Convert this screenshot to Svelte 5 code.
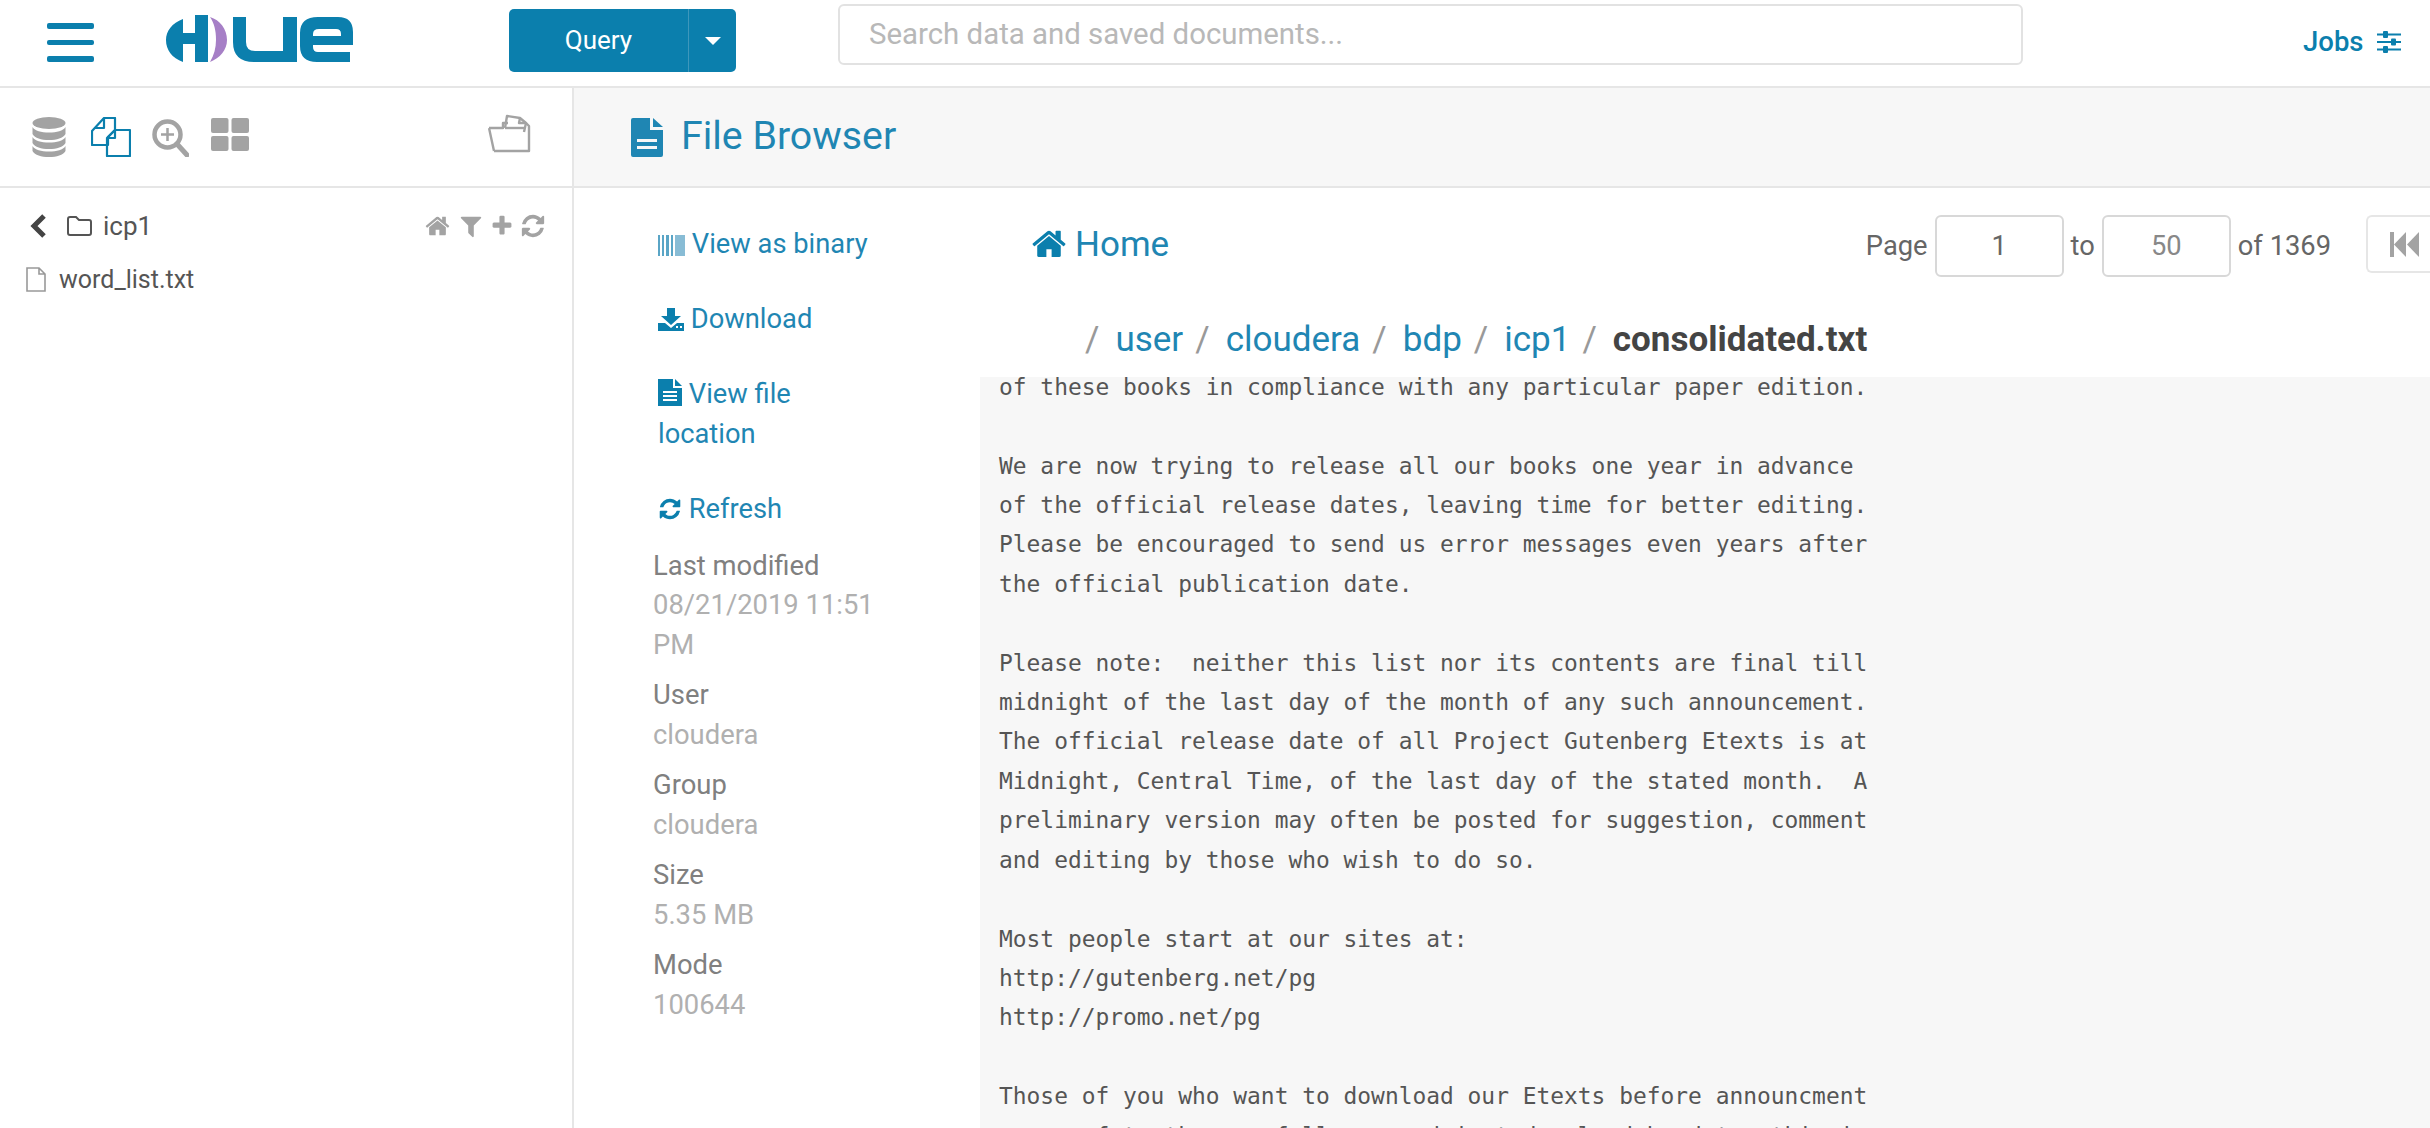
<script>
  const home = "M1472 992v480q0 26-19 45t-45 19h-384v-384h-256v384h-384q-26 0-45-19t-19-45v-480q0-1 .5-3t.5-3l575-474 575 474q1 2 1 6zm223-69l-62 74q-8 9-21 11h-3q-13 0-21-7l-692-577-692 577q-12 8-24 7-13-2-21-11l-62-74q-8-10-7-23.5t11-21.5l719-599q32-26 76-26t76 26l244 204v-195q0-14 9-23t23-9h192q14 0 23 9t9 23v408l219 182q10 8 11 21.5t-7 23.5z";
  const refresh = "M1639 1056q0 5-1 7-64 268-268 434.5t-478 166.5q-146 0-282.5-55t-243.5-157l-129 129q-19 19-45 19t-45-19-19-45v-448q0-26 19-45t45-19h448q26 0 45 19t19 45-19 45l-137 137q71 66 161 102t187 36q134 0 250-65t186-179q11-17 53-117 8-23 30-23h192q13 0 22.5 9.5t9.5 22.5zm25-800v448q0 26-19 45t-45 19h-448q-26 0-45-19t-19-45 19-45l138-138q-148-137-349-137-134 0-250 65t-186 179q-11 17-53 117-8 23-30 23h-199q-13 0-22.5-9.5t-9.5-22.5v-7q65-268 270-434.5t480-166.5q146 0 284 55.5t245 156.5l130-129q19-19 45-19t45 19 19 45z";
  const filter = "M1595 295q17 41-14 70l-493 493v742q0 42-39 59-13 5-25 5-27 0-45-19l-256-256q-19-19-19-45v-486l-493-493q-31-29-14-70 17-39 59-39h1280q42 0 59 39z";
  const plus = "M1600 736v192q0 40-28 68t-68 28h-416v416q0 40-28 68t-68 28h-192q-40 0-68-28t-28-68v-416h-416q-40 0-68-28t-28-68v-192q0-40 28-68t68-28h416v-416q0-40 28-68t68-28h192q40 0 68 28t28 68v416h416q40 0 68 28t28 68z";

  const meta = [
    { label: 'Last modified', value: '08/21/2019 11:51 PM' },
    { label: 'User', value: 'cloudera' },
    { label: 'Group', value: 'cloudera' },
    { label: 'Size', value: '5.35 MB' },
    { label: 'Mode', value: '100644' }
  ];

  const crumbs = ['user', 'cloudera', 'bdp', 'icp1'];

  const fileText = `of these books in compliance with any particular paper edition.

We are now trying to release all our books one year in advance
of the official release dates, leaving time for better editing.
Please be encouraged to send us error messages even years after
the official publication date.

Please note:  neither this list nor its contents are final till
midnight of the last day of the month of any such announcement.
The official release date of all Project Gutenberg Etexts is at
Midnight, Central Time, of the last day of the stated month.  A
preliminary version may often be posted for suggestion, comment
and editing by those who wish to do so.

Most people start at our sites at:
http://gutenberg.net/pg
http://promo.net/pg

Those of you who want to download our Etexts before announcment
can surf to them as follows, and just download by date; this is`;
</script>

<div class="page">
  <header class="topbar">
    <div class="burger"><span></span><span></span><span></span></div>
    <svg class="logo" width="220" height="80" viewBox="0 0 220 80">
      <path fill="#0b7fad" d="M33 19C22 23 16 31 16 40C16 50 22 58 33 62V44H45V62H58V15H45V33H33Z" />
      <path fill="#a67fc6" d="M60 17C70 20 77 29 77 40C77 50 70 58 60 62C64 55 66 48 66 40C66 30 64 23 60 17Z" />
      <path fill="#0b7fad" d="M83 17H96V42Q96 51 105 51H133V17H147V62H104Q83 62 83 42Z" />
      <path fill="#0b7fad" fill-rule="evenodd" d="M168 17H188Q203 17 203 32V45H163V47Q163 52 168 52H200V62H167Q150 62 150 46V33Q150 17 168 17ZM163 36H191V34Q191 29 186 29H169Q163 29 163 34Z" />
    </svg>
    <div class="query">
      <span class="query-label">Query</span>
      <span class="query-caret"><i></i></span>
    </div>
    <div class="search">Search data and saved documents...</div>
    <div class="jobs">
      Jobs
      <svg width="24" height="22" viewBox="0 0 24 22" fill="#0b7fad">
        <rect x="0" y="2.5" width="24" height="2" /><rect x="0" y="10" width="24" height="2" /><rect x="0" y="17.5" width="24" height="2" />
        <rect x="6" y="0" width="5" height="7" rx="1" /><rect x="14" y="7.5" width="5" height="7" rx="1" /><rect x="6" y="15" width="5" height="7" rx="1" />
      </svg>
    </div>
  </header>

  <div class="body">
    <aside class="sidebar">
      <div class="side-tabs">
        <svg width="34" height="40" viewBox="0 0 34 40" fill="#a3a3a3">
          <ellipse cx="17" cy="6" rx="16.5" ry="6" />
          <path d="M.5 10C3 14 9 15.5 17 15.500S31 14 33.500 10V17C31 21 25 23 17 23S3 21 .5 17Z" />
          <path d="M.5 20C3 24 9 25.500 17 25.500S31 24 33.500 20V26C31 30 25 32 17 32S3 30 .5 26Z" />
          <path d="M.5 29C3 33 9 34.500 17 34.500S31 33 33.500 29V34C31 38 25 40 17 40S3 38 .5 34Z" />
        </svg>
        <svg class="tab-docs" width="40" height="40" viewBox="0 0 40 40" fill="none" stroke="#0b7fad" stroke-width="2.200" stroke-linejoin="round">
          <path d="M13 1H24V13L17 20V28H1V14Z" />
          <path d="M13 1V11H3" />
          <path d="M24 13H39V39H16V21Z" />
          <path d="M24 13V21H17" />
        </svg>
        <svg width="37" height="38" viewBox="0 0 37 38" fill="none" stroke="#a3a3a3">
          <circle cx="15.500" cy="15.500" r="13" stroke-width="4.500" />
          <path d="M25 25L35 36" stroke-width="5" stroke-linecap="round" />
          <path d="M15.500 9V22M9 15.500H22" stroke-width="2.500" />
        </svg>
        <svg class="tab-grid" width="38" height="33" viewBox="0 0 38 33" fill="#a3a3a3">
          <rect x="0" y="0" width="17.500" height="15" rx="2" /><rect x="20.500" y="0" width="17.500" height="15" rx="2" />
          <rect x="0" y="18" width="17.500" height="15" rx="2" /><rect x="20.500" y="18" width="17.500" height="15" rx="2" />
        </svg>
        <svg class="tab-open" width="44" height="39" viewBox="0 0 44 39" fill="none" stroke="#a3a3a3" stroke-width="2.400" stroke-linejoin="round">
          <path d="M6 37H41V12L38 9M1 14H15V9H20M1 14L6 37" />
          <path d="M17 14L19 2L32 4L38 9L36 18" />
          <path d="M32 4L31 9L38 9" />
          <path d="M17 14H36" />
        </svg>
      </div>
      <div class="tree">
        <div class="tree-head">
          <svg class="back" width="16" height="24" viewBox="0 0 16 24" fill="none" stroke="#444" stroke-width="5"><path d="M14 2L4 12L14 22" /></svg>
          <svg class="folder" width="25" height="20" viewBox="0 0 25 20" fill="none" stroke="#555" stroke-width="2"><path d="M1 3Q1 1 3 1H9L12 4H22Q24 4 24 6V17Q24 19 22 19H3Q1 19 1 17Z" /></svg>
          <span class="tree-name">icp1</span>
          <div class="tree-tools">
            <svg class="tool-home" width="27" height="26" viewBox="0 0 1792 1792" fill="#a3a3a3"><path d={home} /></svg>
            <svg width="26" height="26" viewBox="0 0 1792 1792" fill="#a3a3a3"><path d={filter} /></svg>
            <svg width="24" height="24" viewBox="0 0 1792 1792" fill="#a3a3a3"><path d={plus} /></svg>
            <svg width="26" height="26" viewBox="0 0 1792 1792" fill="#a3a3a3"><path d={refresh} /></svg>
          </div>
        </div>
        <div class="tree-file">
          <svg width="20" height="25" viewBox="0 0 20 25" fill="none" stroke="#999" stroke-width="1.600"><path d="M1 1H13L19 7V24H1ZM13 1V7H19" /></svg>
          <span>word_list.txt</span>
        </div>
      </div>
    </aside>

    <main class="main">
      <div class="title-bar">
        <svg width="32" height="39" viewBox="0 0 32 39" fill="#1f86b3">
          <path fill-rule="evenodd" d="M2 0H19V12H32V37Q32 39 30 39H2Q0 39 0 37V2Q0 0 2 0ZM6 21V24H26V21ZM6 28V31H26V28Z" />
          <path d="M22 0L32 9H22Z" />
        </svg>
        <h1>File Browser</h1>
      </div>

      <div class="browser">
        <div class="actions">
          <a class="action">
            <svg width="27" height="21" viewBox="0 0 27 21" fill="#5aa5c6"><rect x="0" width="2" height="21" /><rect x="4" width="2" height="21" /><rect x="8" width="3" height="21" /><rect x="13" width="2" height="21" /><rect x="17" width="10" height="21" fill="#88bcd5" /></svg>
            View as binary
          </a>
          <a class="action">
            <svg width="26" height="23" viewBox="0 0 26 23" fill="#0b7fad"><path d="M9 0H17V8H23L13 17L3 8H9Z" /><path fill-rule="evenodd" d="M0 15H7L13 20L19 15H26V23H0ZM18 18V20H20V18ZM22 18V20H24V18Z" /></svg>
            Download
          </a>
          <a class="action">
            <svg width="24" height="27" viewBox="0 0 24 27" fill="#0b7fad">
              <path fill-rule="evenodd" d="M0 0H15V9H24V27H0ZM5 12V14H19V12ZM5 16V18H19V16ZM5 20V22H19V20Z" />
              <path d="M17 0L24 7H17Z" />
            </svg>
            View file location
          </a>
          <a class="action">
            <svg width="24" height="24" viewBox="0 0 1792 1792" fill="#0b7fad"><path d={refresh} /></svg>
            Refresh
          </a>

          <dl class="meta">
            {#each meta as item}
              <dt>{item.label}</dt>
              <dd>{item.value}</dd>
            {/each}
          </dl>
        </div>

        <div class="viewer">
          <div class="viewer-head">
            <a class="home">
              <svg width="34" height="32" viewBox="64 200 1664 1400" fill="#0b7fad"><path d={home} /></svg>
              Home
            </a>
            <div class="pager">
              <span>Page</span>
              <span class="page-box dark">1</span>
              <span>to</span>
              <span class="page-box">50</span>
              <span>of 1369</span>
              <span class="page-btn">
                <svg width="29" height="25" viewBox="0 0 29 25" fill="#a3a3a3"><rect width="4" height="25" /><path d="M4 12.500L16 0V25Z" /><path d="M17 12.500L29 0V25Z" /></svg>
              </span>
            </div>
          </div>

          <div class="crumbs">
            <span class="sep">/</span>
            {#each crumbs as crumb}
              <a>{crumb}</a>
              <span class="sep">/</span>
            {/each}
            <strong>consolidated.txt</strong>
          </div>

          <div class="file-view">
            <pre>{fileText}</pre>
          </div>
        </div>
      </div>
    </main>
  </div>
</div>

<style>
  :global(body) {
    margin: 0;
    background: #fff;
    font-family: Roboto, sans-serif;
    color: #444;
  }
  .page {
    width: 2430px;
    height: 1128px;
    overflow: hidden;
    display: flex;
    flex-direction: column;
  }
  .topbar {
    height: 86px;
    flex: none;
    display: flex;
    align-items: flex-start;
    padding-left: 47px;
    border-bottom: 2px solid #e6e6e6;
  }
  .burger {
    width: 47px;
    margin-top: 23px;
    display: flex;
    flex-direction: column;
    gap: 11px;
  }
  .burger span {
    height: 5.500px;
    background: #0b7fad;
    border-radius: 2px;
  }
  .logo {
    margin-left: 56px;
    flex: none;
  }
  .query {
    margin: 9px 0 0 139px;
    width: 227px;
    height: 63px;
    display: flex;
    background: #0b7fad;
    border-radius: 5px;
    color: #fff;
    font-size: 26px;
  }
  .query-label {
    width: 179px;
    text-align: center;
    line-height: 63px;
    border-right: 1px solid #3d97bc;
  }
  .query-caret {
    flex: 1;
    display: flex;
    align-items: center;
    justify-content: center;
  }
  .query-caret i {
    border-left: 8px solid transparent;
    border-right: 8px solid transparent;
    border-top: 8px solid #fff;
  }
  .search {
    margin: 4px 0 0 102px;
    width: 1185px;
    height: 61px;
    box-sizing: border-box;
    border: 2px solid #e2e2e2;
    border-radius: 6px;
    padding-left: 29px;
    line-height: 56px;
    font-size: 29.400px;
    color: #b8b8b8;
  }
  .jobs {
    margin: 22px 0 0 280px;
    display: flex;
    align-items: center;
    gap: 13px;
    font-size: 27.500px;
    font-weight: 500;
    line-height: 40px;
    color: #0b7fad;
  }
  .body {
    flex: 1;
    display: flex;
    min-height: 0;
  }
  .sidebar {
    width: 572px;
    flex: none;
    border-right: 2px solid #e6e6e6;
  }
  .side-tabs {
    height: 100px;
    box-sizing: border-box;
    border-bottom: 2px solid #e6e6e6;
    padding: 29px 40px 0 32px;
    display: flex;
    align-items: flex-start;
  }
  .tab-docs { margin-left: 25px; }
  .side-tabs svg:nth-child(3) { margin: 2px 0 0 21px; }
  .tab-grid { margin: 1px 0 0 22px; }
  .tab-open { margin: -3px 0 0 auto; }
  .tree {
    padding: 21px 26px 0 30px;
  }
  .tree-head {
    display: flex;
    align-items: center;
    height: 34px;
  }
  .folder { margin-left: 21px; }
  .tree-name {
    margin-left: 11px;
    font-size: 26px;
    color: #555;
  }
  .tree-tools {
    margin-left: auto;
    display: flex;
    align-items: center;
    gap: 6px;
  }
  .tool-home { margin-right: 1px; }
  .tree-file {
    margin: 22px 0 0 -4px;
    display: flex;
    align-items: center;
    gap: 13px;
    font-size: 25px;
    color: #555;
  }
  .main {
    flex: 1;
    min-width: 0;
    display: flex;
    flex-direction: column;
  }
  .title-bar {
    height: 98px;
    box-sizing: content-box;
    flex: none;
    background: #f7f7f7;
    border-bottom: 2px solid #e6e6e6;
    display: flex;
    align-items: center;
    gap: 18px;
    padding-left: 57px;
  }
  .title-bar h1 {
    margin: -3px 0 0;
    font-size: 39.300px;
    font-weight: 400;
    color: #1f86b3;
  }
  .browser {
    flex: 1;
    display: flex;
    min-height: 0;
  }
  .actions {
    width: 406px;
    flex: none;
    box-sizing: border-box;
    padding: 37px 0 0 84px;
  }
  .action {
    display: block;
    width: 225px;
    margin-bottom: 35.500px;
    font-size: 27.300px;
    line-height: 39.500px;
    color: #1f86b3;
  }
  .action svg {
    vertical-align: -3px;
  }
  .meta {
    margin: -18px 0 0 -5px;
    width: 225px;
    font-size: 27.400px;
    line-height: 39.500px;
  }
  .meta dt {
    color: #808080;
  }
  .meta dd {
    margin: 0 0 11px;
    color: #b0b0b0;
  }
  .viewer {
    flex: 1;
    min-width: 0;
    display: flex;
    flex-direction: column;
  }
  .viewer-head {
    display: flex;
    align-items: flex-start;
    padding: 27px 0 0 52px;
    height: 62px;
    flex: none;
  }
  .home {
    display: flex;
    align-items: center;
    gap: 9px;
    height: 58px;
    font-size: 35px;
    color: #1f86b3;
  }
  .pager {
    margin-left: auto;
    display: flex;
    align-items: center;
    height: 62px;
    gap: 7px;
    font-size: 27.300px;
    color: #666;
    margin-right: -16px;
  }
  .page-box {
    box-sizing: border-box;
    width: 129px;
    height: 62px;
    border: 2px solid #d8d8d8;
    border-radius: 6px;
    text-align: center;
    line-height: 58px;
    color: #888;
  }
  .page-box.dark { color: #666; }
  .page-btn {
    box-sizing: border-box;
    margin-left: 28px;
    width: 80px;
    height: 58px;
    border: 2px solid #e6e6e6;
    border-right: 0;
    border-radius: 6px 0 0 6px;
    padding: 15px 0 0 22px;
    align-self: flex-start;
  }
  .crumbs {
    flex: none;
    margin-top: 41px;
    padding: 0 0 16px 93px;
    display: flex;
    align-items: center;
    height: 43px;
    font-size: 35px;
    color: #1f86b3;
  }
  .crumbs .sep {
    margin: 0 16px 0 12px;
    color: #999;
  }
  .crumbs strong {
    font-weight: 700;
    color: #444;
  }
  .file-view {
    flex: 1;
    min-height: 0;
    overflow: hidden;
    background: #f7f7f7;
  }
  pre {
    margin: -9.200px 0 0;
    padding-left: 19px;
    font-family: "DejaVu Sans Mono", monospace;
    font-size: 22.900px;
    line-height: 39.400px;
    color: #555;
  }
</style>
